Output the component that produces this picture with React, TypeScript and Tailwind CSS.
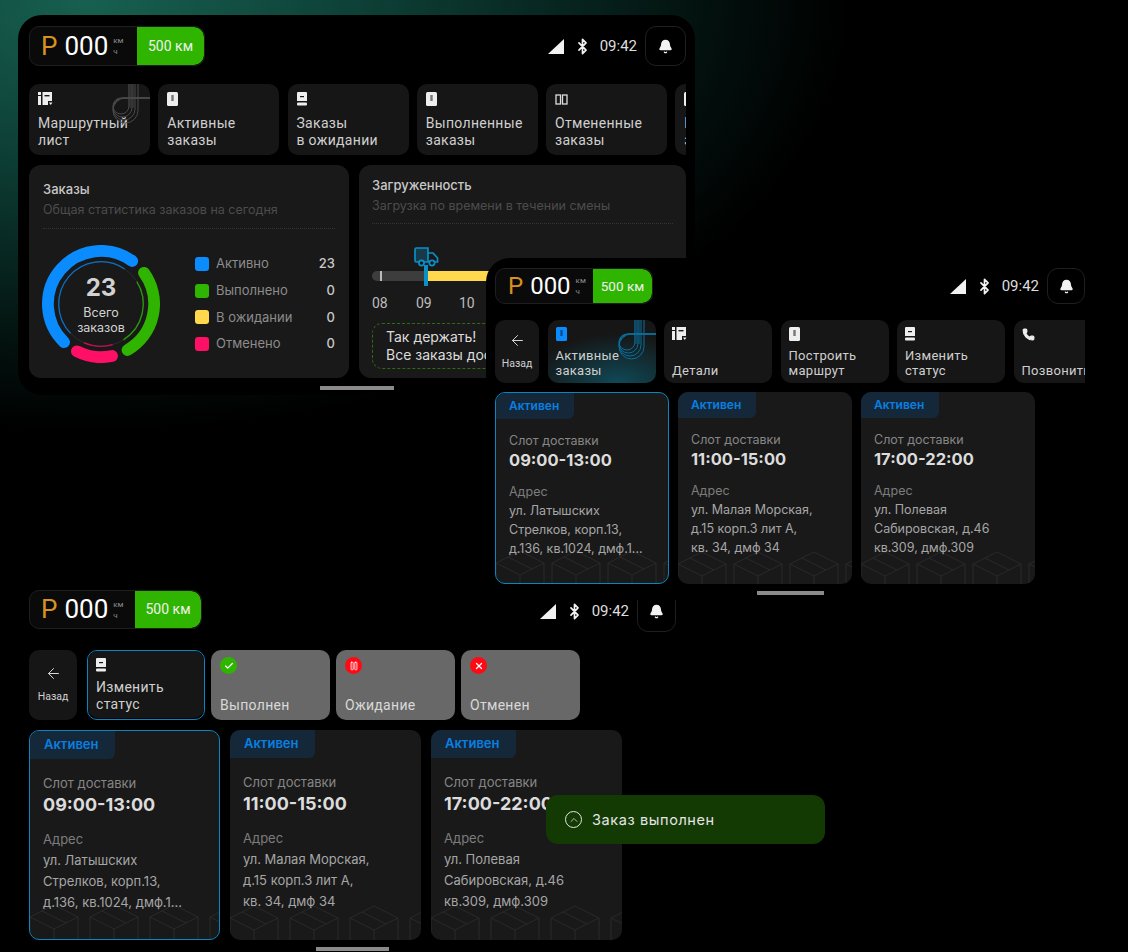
import React from "react"
import {ArrowLeft, Bell, Bluetooth, Check, ChevronUp, Pause, Phone, X} from "lucide-react"

const roboto = "font-['Roboto',sans-serif]"

function polar(r: number, deg: number) {
  const a = ((deg - 90) * Math.PI) / 180
  return `${(60 + r * Math.cos(a)).toFixed(2)} ${(60 + r * Math.sin(a)).toFixed(2)}`
}

function arc(r: number, from: number, to: number) {
  const span = ((to - from) % 360 + 360) % 360
  return `M${polar(r, from)} A${r} ${r} 0 ${span > 180 ? 1 : 0} 1 ${polar(r, to)}`
}

function Ring() {
  return (
    <div className="relative w-[118px] h-[118px] shrink-0">
      <svg viewBox="0 0 120 120" className="w-full h-full" fill="none">
        <circle cx="60" cy="60" r="43" stroke="#2c2c2c" strokeWidth="1" />
        <path d={arc(54, 224, 36)} stroke="#0a8cff" strokeWidth="12" strokeLinecap="round" />
        <path d={arc(54, 54, 150)} stroke="#2fb500" strokeWidth="12" strokeLinecap="round" />
        <path d={arc(54, 168, 207)} stroke="#ff0f66" strokeWidth="12" strokeLinecap="round" />
        <path d={arc(43, 226, 34)} stroke="#0a6fc4" strokeWidth="1.3" />
        <path d={arc(43, 58, 148)} stroke="#2a9a08" strokeWidth="1.3" />
        <path d={arc(43, 164, 204)} stroke="#c80d52" strokeWidth="1.3" />
      </svg>
      <div className="absolute inset-0 flex flex-col items-center justify-center text-[#d2d2d2]">
        <div className="text-[24px] leading-[28px] font-bold">23</div>
        <div className="text-[12.5px] leading-[15px] text-center mt-[3px]">Всего<br />заказов</div>
      </div>
    </div>
  )
}

function SpeedBadge({big}: {big: "a" | "b" | "c"}) {
  const box = {a: "w-[176px] h-[40px]", b: "w-[158px] h-[36px]", c: "w-[173px] h-[39px]"}[big]
  const green = {a: "w-[67px] text-[14px]", b: "w-[59px] text-[13.5px]", c: "w-[66px] text-[14px]"}[big]
  const num = {a: "text-[26px] pl-[11px]", b: "text-[24px] pl-[12px]", c: "text-[26px] pl-[11px]"}[big]
  return (
    <div className={`${box} ${roboto} flex rounded-[10px] border border-[#1f1f1f] bg-[#0a0a0a] overflow-hidden`}>
      <div className={`${num} flex-1 flex items-center`}>
        <span className="text-[#d8921f]">P</span>
        <span className="text-white ml-[7px]">000</span>
        <span className="text-[8px] leading-[11px] text-[#8a8a8a] ml-[5px]">км<br />ч</span>
      </div>
      <div className={`${green} bg-[#2fb500] text-[#f0f0f0] flex items-center justify-center rounded-r-[10px]`}>500 км</div>
    </div>
  )
}

function StatusBar({bell}: {bell: string}) {
  return (
    <div className={`${roboto} flex items-start`}>
      <div className="flex items-center h-full">
        <svg width="16" height="15" viewBox="0 0 16 15"><path d="M16 0V15H0Z" fill="#f2f2f2" /></svg>
        <Bluetooth size={17} strokeWidth={2.4} className="text-[#f2f2f2] ml-[10px]" />
        <span className="text-[15px] text-[#dedede] ml-[9px]">09:42</span>
      </div>
      <div className={`${bell} ml-[8px] flex items-center justify-center rounded-[11px] border border-[#1f1f1f] bg-black`}>
        <Bell size={15} fill="#f2f2f2" className="text-[#f2f2f2]" />
      </div>
    </div>
  )
}

function TileIcon({kind}: {kind: string}) {
  if (kind === "phone") return <Phone size={13} fill="#eee" className="text-[#eee]" />
  if (kind === "route")
    return (
      <svg width="15" height="14" viewBox="0 0 15 14" fill="#eee">
        <rect x="0" y="0" width="3" height="3" />
        <rect x="0" y="4" width="3" height="9" />
        <path d="M4.5 0H14V9H10V13H4.5Z" />
        <rect x="6.5" y="3" width="5" height="1.4" fill="#161616" />
        <path d="M11 10.5H14.5L12.7 13Z" />
      </svg>
    )
  if (kind === "columns")
    return (
      <svg width="13" height="11" viewBox="0 0 13 11" fill="none" stroke="#ddd" strokeWidth="1.3">
        <rect x="1" y="1" width="4.5" height="9" />
        <rect x="7.5" y="1" width="4.5" height="9" />
      </svg>
    )
  if (kind === "stack")
    return (
      <svg width="10" height="14" viewBox="0 0 10 14" fill="#eee">
        <path d="M1 0H9a1 1 0 0 1 1 1V9H0V1a1 1 0 0 1 1-1Z" />
        <rect x="0" y="10.5" width="10" height="3" rx="1" />
        <rect x="3" y="4" width="4" height="1.2" fill="#161616" />
      </svg>
    )
  const fill = kind === "blue" ? "#0a8cff" : "#eee"
  return (
    <svg width="11" height="14" viewBox="0 0 11 14" fill={fill}>
      <rect x="0" y="0" width="11" height="14" rx="1.5" />
      <rect x="4.3" y="3" width="2.4" height="6" fill={kind === "blue" ? "#0a4f94" : "#777"} />
    </svg>
  )
}

function Swirl({color}: {color: string}) {
  const lines = [0, 3, 6, 9]
  return (
    <svg viewBox="0 0 38 42" className="absolute right-0 top-0 w-[38px] h-[42px]" fill="none" stroke={color} strokeWidth="1">
      {lines.map((o) => (
        <g key={o}>
          <path d={`M${17 + o} 0 V${22 + o / 2} a${8 + o / 2} ${8 + o / 2} 0 1 1 -${8 + o / 2} -${8 + o / 2} H38`} />
          <path d={`M${17 + o / 2} 0 V24`} opacity="0.5" />
        </g>
      ))}
    </svg>
  )
}

function Tile({label, icon, size, swirl, glow}: {label: string[]; icon: string; size: string; swirl?: string; glow?: boolean}) {
  return (
    <div className={`${size} relative shrink-0 rounded-[10px] overflow-hidden bg-[#161616] flex flex-col justify-between ${roboto} ${glow ? "bg-[radial-gradient(ellipse_90px_50px_at_70px_64px,#0f4a58_0%,#161616_100%)]" : ""}`}>
      {swirl && <Swirl color={swirl} />}
      <div className="h-[14px] flex items-center"><TileIcon kind={icon} /></div>
      <div className="tracking-[0.3px] text-[#cfcfcf]">
        {label.map((l) => <div key={l}>{l}</div>)}
      </div>
    </div>
  )
}

function BackTile({size}: {size: string}) {
  return (
    <div className={`${size} shrink-0 rounded-[10px] bg-[#161616] flex flex-col items-center justify-center ${roboto}`}>
      <ArrowLeft size={17} strokeWidth={1.4} className="text-[#d8d8d8]" />
      <div className="text-[10.5px] text-[#d0d0d0] mt-[7px]">Назад</div>
    </div>
  )
}

function Boxes({h, count, step}: {h: number; count: number; step: number}) {
  return (
    <svg className="absolute bottom-0 left-0 w-full" height={h} fill="none" stroke="#2a2a2a" strokeWidth="1">
      {Array.from({length: count}).map((_, i) => (
        <g key={i} transform={`translate(${i * step - 2} 2)`}>
          <path d={`M2 12 L26 0 L50 12 L26 24Z`} />
          <path d={`M2 12 V${h} M50 12 V${h} M26 24 V${h}`} />
          <path d={`M14 6 L38 18`} />
        </g>
      ))}
    </svg>
  )
}

function OrderCard({slot, address, active, large}: {slot: string; address: string[]; active?: boolean; large?: boolean}) {
  const s = large
    ? {box: "w-[191px] h-[210px]", badge: "w-[85px] h-[28px] pl-[14px] text-[13px]", body: "px-[13px] pt-[16px]", lab: "text-[13px] leading-[16px]", time: "text-[18px] leading-[22px] mt-[3px]", adr: "mt-[15px]", lines: "text-[13px] leading-[21px] mt-[3px]"}
    : {box: "w-[174px] h-[192px]", badge: "w-[78px] h-[26px] pl-[13px] text-[12px]", body: "px-[13px] pt-[14px]", lab: "text-[12.5px] leading-[15px]", time: "text-[16.5px] leading-[20px] mt-[2px]", adr: "mt-[14px]", lines: "text-[12.5px] leading-[19px] mt-[2px]"}
  return (
    <div className={`${s.box} relative shrink-0 overflow-hidden rounded-[10px] bg-[#191919] ${active ? "border-[1.5px] border-[#0a85c0]" : ""}`}>
      <Boxes h={large ? 36 : 34} count={4} step={large ? 60 : 56} />
      <div className={`${s.badge} bg-[#14283a] text-[#0a7fe0] font-semibold flex items-center rounded-br-[6px]`}>Активен</div>
      <div className={`${s.body} relative`}>
        <div className={`${s.lab} text-[#868686]`}>Слот доставки</div>
        <div className={`${s.time} font-bold text-[#dcdcdc] whitespace-nowrap`}>{slot}</div>
        <div className={`${s.lab} ${s.adr} text-[#7c7c7c]`}>Адрес</div>
        <div className={`${s.lines} text-[#a6a6a6] whitespace-nowrap`}>
          {address.map((l) => <div key={l}>{l}</div>)}
        </div>
      </div>
    </div>
  )
}

const orders = [
  {slot: "09:00-13:00", address: ["ул. Латышских", "Стрелков, корп.13,", "д.136, кв.1024, дмф.1..."], active: true},
  {slot: "11:00-15:00", address: ["ул. Малая Морская,", "д.15 корп.3 лит А,", "кв. 34, дмф 34"]},
  {slot: "17:00-22:00", address: ["ул. Полевая", "Сабировская, д.46", "кв.309, дмф.309"]},
]

const legend = [
  {name: "Активно", value: 23, color: "bg-[#0a8cff]"},
  {name: "Выполнено", value: 0, color: "bg-[#2fb500]"},
  {name: "В ожидании", value: 0, color: "bg-[#ffd84d]"},
  {name: "Отменено", value: 0, color: "bg-[#ff0f66]"},
]

const dashTile = "w-[121px] h-[71px] pl-[9px] pt-[8px] pb-[6px] text-[14px] leading-[17px]"
const detailTile = "w-[108px] h-[63px] pl-[8px] pt-[7px] pb-[5px] text-[13px] leading-[15px]"
const statusTile = "w-[119px] h-[70px] pl-[9px] pt-[8px] pb-[6px] text-[14px] leading-[17px]"

function StatusOption({label, color, icon}: {label: string; color: string; icon: React.ReactNode}) {
  return (
    <div className={`w-[119px] h-[70px] shrink-0 rounded-[10px] bg-[#686868] pl-[9px] pt-[7px] pb-[6px] flex flex-col justify-between ${roboto}`}>
      <div className={`${color} w-[17px] h-[17px] rounded-full flex items-center justify-center text-white`}>{icon}</div>
      <div className="text-[14px] leading-[17px] tracking-[0.3px] text-[#d8d8d8]">{label}</div>
    </div>
  )
}

function Dashboard() {
  return (
    <div className="absolute left-[18px] top-[15px] z-10 w-[677px] h-[380px] rounded-[24px] overflow-hidden bg-black pl-[11px] pt-[11px]">
      <div className="w-[657px] flex justify-between">
        <SpeedBadge big="a" />
        <StatusBar bell="w-[41px] h-[40px]" />
      </div>
      <div className="w-[657px] mt-[18px] flex gap-[8.25px] overflow-hidden">
        <Tile size={dashTile} icon="route" label={["Маршрутный", "лист"]} swirl="#4a4a4a" />
        <Tile size={dashTile} icon="doc" label={["Активные", "заказы"]} />
        <Tile size={dashTile} icon="stack" label={["Заказы", "в ожидании"]} />
        <Tile size={dashTile} icon="doc" label={["Выполненные", "заказы"]} />
        <Tile size={dashTile} icon="columns" label={["Отмененные", "заказы"]} />
        <Tile size={dashTile} icon="doc" label={["Все", "заказы"]} />
      </div>
      <div className="mt-[10px] flex gap-[10px]">
        <div className="w-[320px] h-[213px] rounded-[12px] bg-[#191919] px-[14px] pt-[16px]">
          <div className="text-[13px] leading-[16px] text-[#c8c8c8] font-medium">Заказы</div>
          <div className="text-[12.5px] leading-[16px] mt-[5px] text-[#4c4c4c] whitespace-nowrap">Общая статистика заказов на сегодня</div>
          <div className="border-b border-dotted border-[#333] mt-[10px]" />
          <div className="flex items-center mt-[16px] -ml-[1px]">
            <Ring />
            <div className="flex-1 ml-[35px]">
              {legend.map((row) => (
                <div key={row.name} className="flex items-center h-[26.6px] text-[13px]">
                  <span className={`${row.color} w-[14px] h-[14px] rounded-[3px]`} />
                  <span className="ml-[7px] text-[#8c8c8c]">{row.name}</span>
                  <span className="ml-auto text-[#c8c8c8] font-medium">{row.value}</span>
                </div>
              ))}
            </div>
          </div>
        </div>
        <div className="w-[327px] h-[213px] rounded-[12px] bg-[#191919] px-[13px] pt-[12px]">
          <div className="text-[13px] leading-[16px] text-[#c8c8c8] font-medium">Загруженность</div>
          <div className="text-[12.5px] leading-[16px] mt-[5px] text-[#4c4c4c] whitespace-nowrap">Загрузка по времени в течении смены</div>
          <div className="border-b border-dotted border-[#333] mt-[9px]" />
          <div className="relative h-[39px] mt-[23px]">
            <svg className="absolute left-[42px] top-0" width="25" height="20" viewBox="0 0 25 20" fill="none" stroke="#0a8fc7" strokeWidth="1.7">
              <path d="M5 15H2.5A1.5 1.5 0 0 1 1 13.5V2.5A1.5 1.5 0 0 1 2.5 1H14V15H10" fill="#173a4a" />
              <path d="M14 6H19L23.5 11V15H21M15 15H14" />
              <circle cx="7.5" cy="16" r="2.6" />
              <circle cx="18" cy="16" r="2.6" />
            </svg>
            <div className="absolute left-[52px] top-[18px] w-[4px] h-[21px] bg-[#0a8fc7] z-10" />
            <div className="absolute left-0 top-[24px] w-[54px] h-[10px] rounded-l-[5px] bg-[#3d3d3d]">
              <div className="ml-[8px] w-[2px] h-[10px] bg-[#bbb]" />
            </div>
            <div className="absolute left-[54px] top-[24px] right-0 h-[10px] bg-[#ffd84d]" />
          </div>
          <div className={`${roboto} relative h-[20px] mt-[7px] text-[14px] text-[#bdbdbd] flex`}>
            <span className="w-[44px]">08</span>
            <span className="w-[43px]">09</span>
            <span>10</span>
          </div>
          <div className="mt-[10px] h-[46px] rounded-[10px] border border-dashed border-[#2f6b14] pl-[13px] py-[4px] text-[14px] leading-[18px] text-[#dcdcdc] whitespace-nowrap">
            <div>Так держать!</div>
            <div>Все заказы доставлены</div>
          </div>
        </div>
      </div>
      <div className="ml-[291px] mt-[8px] w-[74px] h-[4px] bg-[#8a8a8a]" />
    </div>
  )
}

function OrderList() {
  return (
    <div className="absolute left-[486px] top-[258px] z-20 w-[599px] h-[342px] rounded-tl-[24px] overflow-hidden bg-black pl-[9px] pt-[10px]">
      <div className="w-[590px] flex justify-between">
        <SpeedBadge big="b" />
        <StatusBar bell="w-[38px] h-[36px]" />
      </div>
      <div className="w-[590px] mt-[16px] flex gap-[8.5px] overflow-hidden">
        <BackTile size="w-[44px] h-[63px]" />
        <Tile size={detailTile} icon="blue" label={["Активные", "заказы"]} swirl="#0a6f9c" glow />
        <Tile size={detailTile} icon="route" label={["Детали"]} />
        <Tile size={detailTile} icon="doc" label={["Построить", "маршрут"]} />
        <Tile size={detailTile} icon="stack" label={["Изменить", "статус"]} />
        <Tile size={detailTile} icon="phone" label={["Позвонить"]} />
      </div>
      <div className="mt-[9px] flex gap-[9px]">
        {orders.map((o) => <OrderCard key={o.slot} {...o} />)}
      </div>
      <div className="ml-[262px] mt-[7px] w-[67px] h-[4px] bg-[#8a8a8a]" />
    </div>
  )
}

function StatusChange() {
  return (
    <div className="absolute left-[18px] top-[590px] z-0 w-[670px] h-[362px] bg-black pl-[11px]">
      <div className="w-[647px] flex justify-between">
        <SpeedBadge big="c" />
        <StatusBar bell="w-[39px] h-[42px]" />
      </div>
      <div className="mt-[18px] flex">
        <BackTile size="w-[48px] h-[70px]" />
        <div className="ml-[10px] rounded-[10px] border-[1.5px] border-[#0a85c0]">
          <Tile size="w-[116px] h-[67px] pl-[8px] pt-[7px] pb-[5px] text-[14px] leading-[17px]" icon="stack" label={["Изменить", "статус"]} />
        </div>
        <div className="ml-[6px] flex gap-[6px]">
          <StatusOption label="Выполнен" color="bg-[#2fb500]" icon={<Check size={10} strokeWidth={3} />} />
          <StatusOption label="Ожидание" color="bg-[#ff0a14]" icon={<Pause size={10} strokeWidth={2} />} />
          <StatusOption label="Отменен" color="bg-[#ff0a14]" icon={<X size={10} strokeWidth={3} />} />
        </div>
      </div>
      <div className="mt-[10px] flex gap-[10px]">
        {orders.map((o) => <OrderCard key={o.slot} {...o} large />)}
      </div>
      <div className="ml-[287px] mt-[7px] w-[73px] h-[4px] bg-[#8a8a8a]" />
    </div>
  )
}

export default function App() {
  return (
    <div className="relative w-[1128px] h-[952px] overflow-hidden font-['Inter',sans-serif] bg-black bg-[radial-gradient(ellipse_760px_430px_at_90px_0px,#17604f_0%,#0c3c33_40%,#03120f_80%,#000000_100%)]">
      <Dashboard />
      <StatusChange />
      <OrderList />
      <div className="absolute left-[546px] top-[795px] z-30 w-[279px] h-[49px] rounded-[12px] bg-[#143a04] flex items-center pl-[19px] text-[14.5px] tracking-[0.6px] text-[#e4e4e4]">
        <span className="w-[17px] h-[17px] rounded-full border border-[#e4e4e4] flex items-center justify-center">
          <ChevronUp size={12} strokeWidth={1.5} />
        </span>
        <span className="ml-[10px]">Заказ выполнен</span>
      </div>
    </div>
  )
}
